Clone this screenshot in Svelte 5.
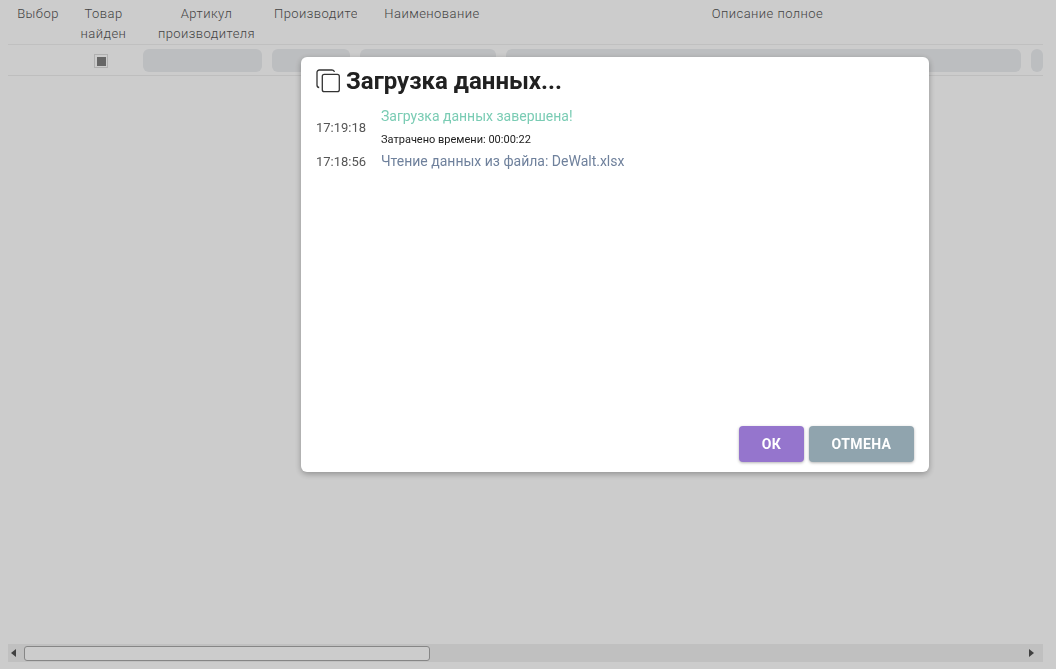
<script>
  const headers = [
    { lines: ['Выбор'] },
    { lines: ['Товар', 'найден'] },
    { lines: ['Артикул', 'производителя'] },
    { lines: ['Производитель'], clip: true },
    { lines: ['Наименование'] },
    { lines: ['Описание полное'] },
    { lines: [] }
  ]

  const log = [
    { time: '17:19:18', text: 'Загрузка данных завершена!', note: 'Затрачено времени: 00:00:22', tone: 'success' },
    { time: '17:18:56', text: 'Чтение данных из файла: DeWalt.xlsx', tone: 'info' }
  ]
</script>

<div class="page">
  <div class="table">
    <div class="row head">
      {#each headers as col}
        <div class="th" class:clip={col.clip}>
          {#each col.lines as line}
            <div class="th-line">{line}</div>
          {/each}
        </div>
      {/each}
    </div>
    <div class="row body">
      <div></div>
      <div class="cell center"><span class="check"><span class="mark"></span></span></div>
      <div class="cell"><span class="field"></span></div>
      <div class="cell"><span class="field"></span></div>
      <div class="cell"><span class="field"></span></div>
      <div class="cell"><span class="field"></span></div>
      <div class="cell last"><span class="field"></span></div>
    </div>
  </div>

  <div class="scrollbar">
    <span class="arrow left"></span>
    <div class="track"><div class="thumb"></div></div>
    <span class="arrow right"></span>
  </div>
</div>

<div class="overlay">
  <div class="modal">
    <div class="title">
      <svg class="icon" width="26" height="26" viewBox="0 0 26 26" fill="none" stroke="#333333" stroke-width="1.3">
        <rect x="7.3" y="6.3" width="17" height="17.4" rx="2" />
        <path d="M4.2 19.5 A2.4 2.4 0 0 1 2 17 V4.5 A2.4 2.4 0 0 1 4.4 2 H17 A2.4 2.4 0 0 1 19.4 4" />
      </svg>
      <h2>Загрузка данных...</h2>
    </div>

    <div class="log">
      {#each log as item}
        <div class="entry">
          <div class="time">{item.time}</div>
          <div class="message">
            <div class="text {item.tone}">{item.text}</div>
            {#if item.note}
              <div class="note">{item.note}</div>
            {/if}
          </div>
        </div>
      {/each}
    </div>

    <div class="actions">
      <button class="btn ok" type="button">ОК</button>
      <button class="btn cancel" type="button">ОТМЕНА</button>
    </div>
  </div>
</div>

<style>
  :global(body) {
    margin: 0;
    background: #ffffff;
    font-family: Roboto, "Liberation Sans", sans-serif;
  }
  .page {
    height: 669px;
    box-sizing: border-box;
    padding: 0 13px 7px 8px;
    display: flex;
    flex-direction: column;
    justify-content: space-between;
    overflow: hidden;
  }
  .row {
    display: grid;
    grid-template-columns: 60px 70px 129px 88px 146px 525px 1fr;
  }
  .head {
    grid-template-columns: 60px 71px 135px 83px 150px 521px 1fr;
    height: 44px;
    border-bottom: 1px solid #f0f0f0;
  }
  .th {
    padding: 4px 5px 0;
    font-size: 13px;
    font-weight: 300;
    letter-spacing: 0.45px;
    line-height: 20px;
    color: #555555;
    text-align: center;
    min-width: 0;
  }
  .th-line {
    white-space: nowrap;
  }
  .clip {
    overflow: hidden;
    padding-left: 0;
    padding-right: 0;
    text-align: left;
  }
  .body {
    height: 30px;
    border-bottom: 1px solid #eeeeee;
  }
  .cell {
    padding: 4px 5px 0;
    min-width: 0;
  }
  .center {
    display: flex;
    justify-content: center;
    padding-top: 9px;
    padding-left: 1px;
  }
  .last {
    padding-right: 0;
  }
  .field {
    display: block;
    height: 23px;
    border-radius: 6px;
    background: #eceef0;
  }
  .check {
    width: 14px;
    height: 14px;
    box-sizing: border-box;
    border: 1px solid #dcdcdc;
    display: flex;
    align-items: center;
    justify-content: center;
  }
  .mark {
    width: 9px;
    height: 9px;
    background: #808080;
  }
  .scrollbar {
    height: 18px;
    display: flex;
    align-items: center;
    background: #f1f1f1;
  }
  .arrow {
    width: 0;
    height: 0;
    border-top: 4px solid transparent;
    border-bottom: 4px solid transparent;
  }
  .arrow.left {
    margin: 0 8px 0 3px;
    border-right: 5px solid #505050;
  }
  .arrow.right {
    margin: 0 9px 0 4px;
    border-left: 5px solid #505050;
  }
  .track {
    flex: 1;
    height: 15px;
  }
  .thumb {
    width: 406px;
    height: 15px;
    box-sizing: border-box;
    border: 1px solid #a8a8a8;
    border-radius: 3px;
    background: #ffffff;
  }
  .overlay {
    position: fixed;
    inset: 0;
    background: rgba(0, 0, 0, 0.2);
  }
  .modal {
    position: absolute;
    left: 301px;
    top: 57px;
    width: 628px;
    height: 415px;
    box-sizing: border-box;
    padding: 9px 15px 10px;
    display: flex;
    flex-direction: column;
    background: #ffffff;
    border-radius: 6px;
    box-shadow: 0 2px 6px rgba(0, 0, 0, 0.3);
  }
  .title {
    display: flex;
    align-items: center;
    gap: 5px;
    height: 30px;
  }
  .icon {
    flex: none;
    margin-left: -1px;
  }
  h2 {
    margin: 0;
    font-size: 24px;
    font-weight: 700;
    line-height: 30px;
    color: #212121;
  }
  .log {
    flex: 1;
    padding-top: 10px;
    display: flex;
    flex-direction: column;
    gap: 2px;
  }
  .entry {
    display: flex;
    align-items: center;
  }
  .time {
    width: 65px;
    font-size: 13px;
    color: #555555;
  }
  .text {
    font-size: 14px;
    line-height: 20px;
  }
  .success {
    color: #7accb4;
  }
  .info {
    color: #6f819c;
  }
  .note {
    margin-top: 5px;
    font-size: 11px;
    line-height: 18px;
    color: #212121;
  }
  .actions {
    display: flex;
    justify-content: flex-end;
    gap: 5px;
  }
  .btn {
    height: 36px;
    border: none;
    border-radius: 4px;
    color: #ffffff;
    font-family: inherit;
    font-size: 14px;
    font-weight: 700;
    letter-spacing: 0.4px;
    box-shadow: 0 1px 3px rgba(0, 0, 0, 0.3);
  }
  .ok {
    width: 65px;
    background: #9575cd;
  }
  .cancel {
    width: 105px;
    background: #90a4ae;
  }
</style>
